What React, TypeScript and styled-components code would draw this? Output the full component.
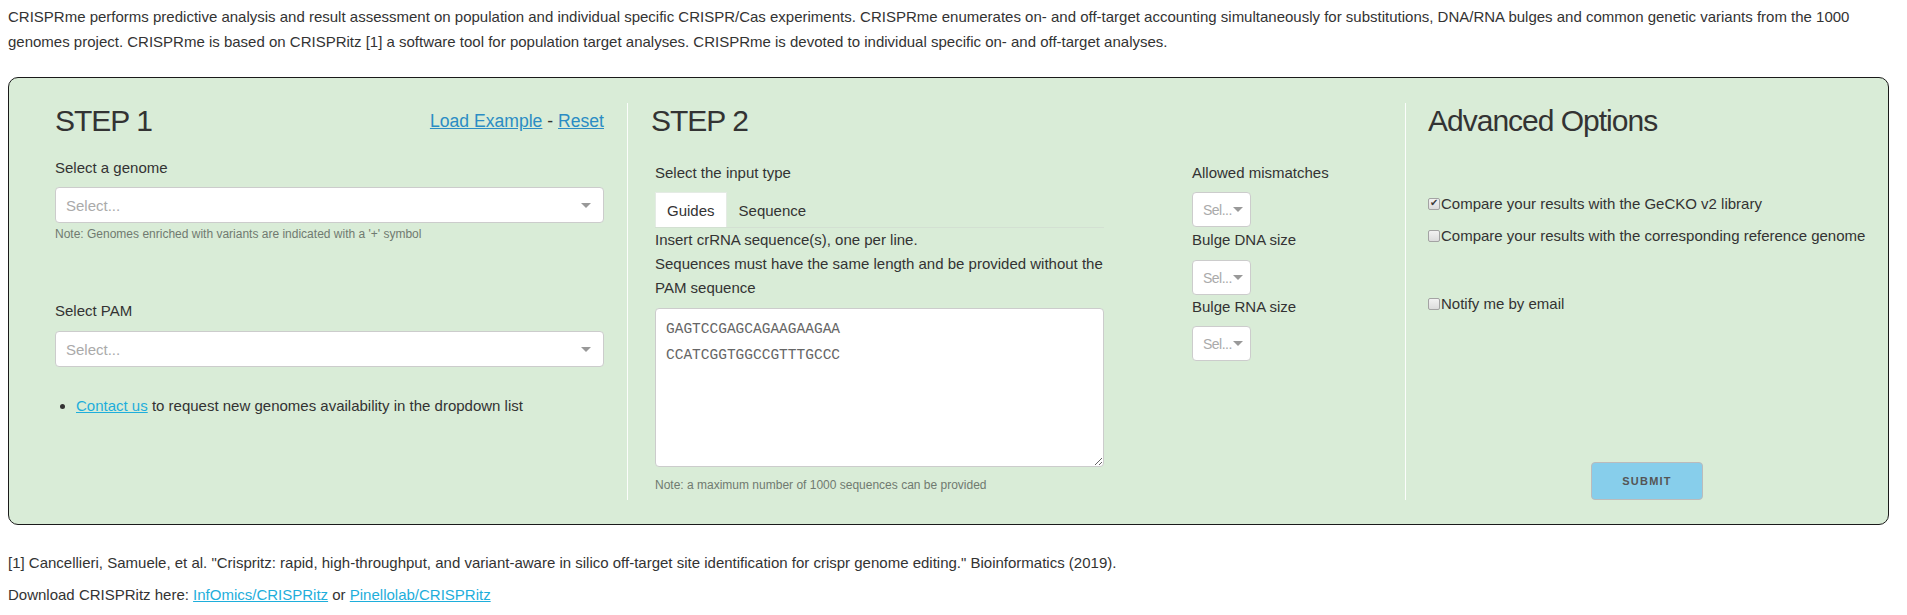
import styled, { createGlobalStyle } from "styled-components";

const GlobalStyle = createGlobalStyle`
  body {
    margin: 0;
    background: #fff;
    font-family: "Liberation Sans", Arial, sans-serif;
    font-size: 15px;
    color: #333;
  }
`;

function Dropdown({ compact }: { compact?: boolean }) {
  return (
    <SelectBox $compact={compact}>
      <Placeholder $compact={compact}>{compact ? "Sel..." : "Select..."}</Placeholder>
      <ArrowZone $compact={compact}>
        <Arrow />
      </ArrowZone>
    </SelectBox>
  );
}

function App() {
  return (
    <>
      <GlobalStyle />
      <Page>
        <Intro>
          CRISPRme performs predictive analysis and result assessment on population and individual specific CRISPR/Cas experiments. CRISPRme enumerates on- and off-target accounting simultaneously for substitutions, DNA/RNA bulges and common genetic variants from the 1000 genomes project. CRISPRme is based on CRISPRitz [1] a software tool for population target analyses. CRISPRme is devoted to individual specific on- and off-target analyses.
        </Intro>
        <Panel>
          <Column $first>
            <HeadRow>
              <Heading>STEP 1</Heading>
              <HeadLinks>
                <Link href="#" $dark>Load Example</Link> - <Link href="#" $dark>Reset</Link>
              </HeadLinks>
            </HeadRow>
            <FieldLabel $top={17}>Select a genome</FieldLabel>
            <Spacer $h={7} />
            <Dropdown />
            <Note $top={3}>Note: Genomes enriched with variants are indicated with a '+' symbol</Note>
            <FieldLabel $top={57}>Select PAM</FieldLabel>
            <Spacer $h={8} />
            <Dropdown />
            <BulletList>
              <li>
                <Link href="#">Contact us</Link> to request new genomes availability in the dropdown list
              </li>
            </BulletList>
          </Column>

          <Column>
            <Heading>STEP 2</Heading>
            <InputGrid>
              <div>
                <FieldLabel $top={0}>Select the input type</FieldLabel>
                <Tabs>
                  <Tab $active>Guides</Tab>
                  <Tab>Sequence</Tab>
                </Tabs>
                <Help>
                  Insert crRNA sequence(s), one per line.
                  <br />
                  Sequences must have the same length and be provided without the PAM sequence
                </Help>
                <GuideArea
                  readOnly
                  defaultValue={"GAGTCCGAGCAGAAGAAGAA\nCCATCGGTGGCCGTTTGCCC"}
                />
                <Note $top={10}>Note: a maximum number of 1000 sequences can be provided</Note>
              </div>
              <div>
                <FieldLabel $top={0}>Allowed mismatches</FieldLabel>
                <Spacer $h={7} />
                <Dropdown compact />
                <FieldLabel $top={1}>Bulge DNA size</FieldLabel>
                <Spacer $h={8} />
                <Dropdown compact />
                <FieldLabel $top={0}>Bulge RNA size</FieldLabel>
                <Spacer $h={7} />
                <Dropdown compact />
              </div>
            </InputGrid>
          </Column>

          <OptionsColumn>
            <OptionsBody>
              <Heading>Advanced Options</Heading>
              <CheckRow $top={53}>
                <Check type="checkbox" defaultChecked />
                Compare your results with the GeCKO v2 library
              </CheckRow>
              <CheckRow $top={8}>
                <Check type="checkbox" />
                Compare your results with the corresponding reference genome
              </CheckRow>
              <CheckRow $top={44}>
                <Check type="checkbox" />
                Notify me by email
              </CheckRow>
            </OptionsBody>
            <SubmitButton>Submit</SubmitButton>
          </OptionsColumn>
        </Panel>
        <Footer>
          <FooterLine>
            [1] Cancellieri, Samuele, et al. "Crispritz: rapid, high-throughput, and variant-aware in silico off-target site identification for crispr genome editing." Bioinformatics (2019).
          </FooterLine>
          <FooterLine>
            Download CRISPRitz here: <Link href="#">InfOmics/CRISPRitz</Link> or <Link href="#">Pinellolab/CRISPRitz</Link>
          </FooterLine>
        </Footer>
      </Page>
    </>
  );
}

const Page = styled.div`
  padding: 4px 18px 0 8px;
`;

const Intro = styled.p`
  margin: 0;
  line-height: 25px;
`;

const Panel = styled.div`
  display: flex;
  margin-top: 23px;
  padding: 25px 0 24px 0;
  background: #d9ecd7;
  border: 1px solid #1a1a1a;
  border-radius: 10px;
`;

const Column = styled.div<{ $first?: boolean }>`
  box-sizing: border-box;
  flex: 0 0 ${(p) => (p.$first ? "619px" : "777px")};
  padding: ${(p) => (p.$first ? "0 23px 7px 46px" : "0 0 7px 23px")};
  border-right: ${(p) => (p.$first ? "1px solid #fbfdfb" : "none")};
  display: flex;
  flex-direction: column;
`;

const OptionsColumn = styled.div`
  flex: 1;
  border-left: 1px solid #fbfdfb;
  display: flex;
  flex-direction: column;
`;

const OptionsBody = styled.div`
  padding-left: 22px;
`;

const HeadRow = styled.div`
  display: flex;
  justify-content: space-between;
  align-items: center;
`;

const Heading = styled.h3`
  margin: 0;
  font-size: 30px;
  line-height: 36px;
  font-weight: 300;
  letter-spacing: -1px;
  color: #333;
`;

const HeadLinks = styled.div`
  font-size: 17.6px;
  color: #333;
`;

const Link = styled.a<{ $dark?: boolean }>`
  color: ${(p) => (p.$dark ? "#2b8cc4" : "#1eaedb")};
  text-decoration: underline;
`;

const FieldLabel = styled.div<{ $top: number }>`
  margin-top: ${(p) => p.$top}px;
  line-height: 24px;
`;

const Spacer = styled.div<{ $h: number }>`
  height: ${(p) => p.$h}px;
`;

const SelectBox = styled.div<{ $compact?: boolean }>`
  box-sizing: border-box;
  display: flex;
  align-items: center;
  width: ${(p) => (p.$compact ? "59px" : "100%")};
  height: ${(p) => (p.$compact ? "35px" : "36px")};
  padding-left: 10px;
  background: #fff;
  border: 1px solid #ccc;
  border-radius: 4px;
`;

const Placeholder = styled.span<{ $compact?: boolean }>`
  flex: ${(p) => (p.$compact ? "0 0 auto" : "1")};
  color: #aaa;
  font-size: ${(p) => (p.$compact ? "14px" : "15px")};
  letter-spacing: ${(p) => (p.$compact ? "-0.5px" : "0")};
`;

const ArrowZone = styled.span<{ $compact?: boolean }>`
  display: flex;
  justify-content: center;
  width: ${(p) => (p.$compact ? "12px" : "25px")};
  padding-right: ${(p) => (p.$compact ? "0" : "5px")};
  margin-top: 2px;
`;

const Arrow = styled.span`
  width: 0;
  height: 0;
  border-style: solid;
  border-width: 5px 5px 2.5px;
  border-color: #999 transparent transparent;
`;

const Note = styled.div<{ $top: number }>`
  margin-top: ${(p) => p.$top}px;
  font-size: 12px;
  line-height: 16px;
  color: #707a70;
`;

const BulletList = styled.ul`
  margin: 27px 0 0 0;
  padding-left: 21px;
  line-height: 24px;
`;

const InputGrid = styled.div`
  display: grid;
  grid-template-columns: 449px 1fr;
  column-gap: 88px;
  margin-top: 22px;
  padding-left: 4px;
`;

const Tabs = styled.div`
  display: flex;
  margin-top: 7px;
  border-bottom: 1px solid #d3e0d2;
`;

const Tab = styled.div<{ $active?: boolean }>`
  height: 35px;
  line-height: 35px;
  padding: 0 11px;
  background: ${(p) => (p.$active ? "#fff" : "transparent")};
  border: 1px solid ${(p) => (p.$active ? "#e4ebe4" : "transparent")};
  border-bottom: none;
  box-sizing: border-box;
  color: #333;
`;

const Help = styled.div`
  line-height: 24px;
  margin-right: -12px;
`;

const GuideArea = styled.textarea`
  box-sizing: border-box;
  display: block;
  width: 100%;
  height: 159px;
  margin-top: 8px;
  padding: 7px 10px;
  border: 1px solid #ccc;
  border-radius: 4px;
  background: #fff;
  font-family: "Liberation Mono", "DejaVu Sans Mono", monospace;
  font-size: 14.5px;
  line-height: 26px;
  color: #666;
  resize: vertical;
  outline: none;
`;

const CheckRow = styled.label<{ $top: number }>`
  display: flex;
  align-items: center;
  margin-top: ${(p) => p.$top}px;
  line-height: 24px;
`;

const Check = styled.input`
  appearance: none;
  position: relative;
  box-sizing: border-box;
  width: 12px;
  height: 12px;
  margin: 0 1px 0 0;
  border: 1px solid #a3a3a3;
  border-radius: 2px;
  background: linear-gradient(#f2f2f2, #dcdcdc);

  &:checked::after {
    content: "✔";
    position: absolute;
    left: 1px;
    top: -3px;
    font-size: 10px;
    line-height: 14px;
    color: #3a3a3a;
  }
`;

const SubmitButton = styled.button`
  align-self: center;
  margin-top: auto;
  height: 38px;
  padding: 0 30px;
  background: #87ceeb;
  border: 1px solid #bbb;
  border-radius: 4px;
  font-family: "Liberation Sans", Arial, sans-serif;
  font-size: 11px;
  font-weight: 700;
  letter-spacing: 1.2px;
  text-transform: uppercase;
  color: #555;
`;

const Footer = styled.div`
  margin-top: 26px;
`;

const FooterLine = styled.p`
  margin: 0 0 8px 0;
  font-size: 15px;
  line-height: 24px;
`;

export default App;
